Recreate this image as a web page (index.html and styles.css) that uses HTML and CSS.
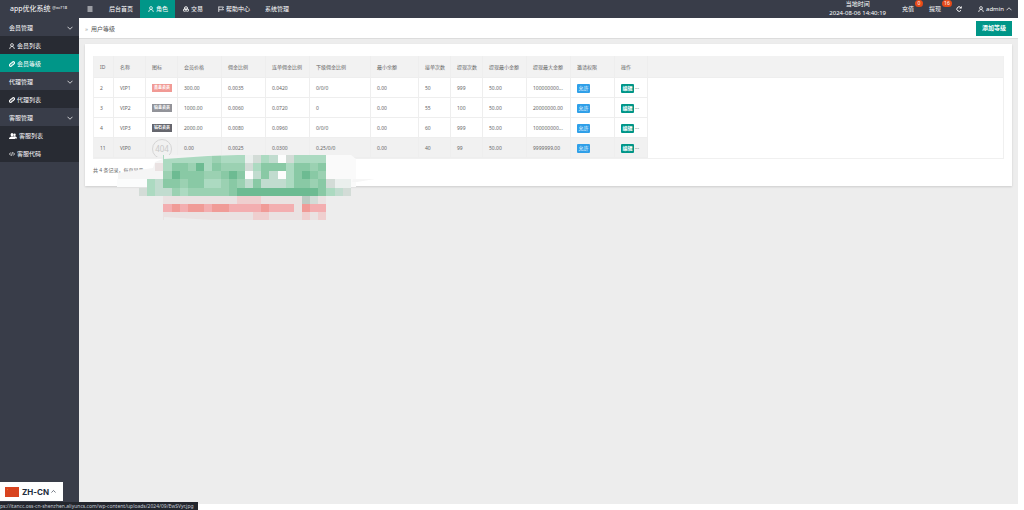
FILE: index.html
```
<!DOCTYPE html>
<html lang="zh-CN">
<head>
<meta charset="utf-8">
<title>app优化系统</title>
<link rel="stylesheet" href="styles.css">
</head>
<body>
<svg class="defs" aria-hidden="true">
  <symbol id="user" viewBox="0 0 12 12"><circle cx="6" cy="4" r="2.8"/><path d="M1.5 12c0-3 1.5-5 4.500-5s4.500 2 4.500 5"/></symbol>
  <symbol id="down" viewBox="0 0 12 12"><path d="M1 3.500l5 5 5-5"/></symbol>
  <symbol id="up" viewBox="0 0 12 12"><path d="M1 8.500l5-5 5 5"/></symbol>
  <symbol id="link" viewBox="0 0 12 12"><path stroke-width="2.200" d="M5 7.500a2 2 0 0 0 3 0l2.300-2.300a2 2 0 0 0-3.200-3.200L6 3M7 4.500a2 2 0 0 0-3 0L1.700 6.800a2 2 0 0 0 3.200 3.200L6 9"/></symbol>
  <symbol id="flag" viewBox="0 0 12 12"><path d="M1.500 1v11M1.500 2h9.500l-2 2.700 2 2.800H1.500"/></symbol>
  <symbol id="trade" viewBox="0 0 12 12"><path d="M6 .8l3 2-3 2-3-2zM3 3v3l3 2 3-2V3M6 5v3M3 5L.8 7v3L3 11.200 6 9.500l3 1.700L11.200 10V7L9 5M1 7.500h10"/></symbol>
</svg>
<div class="app">
  <header class="topbar">
    <h1 class="brand">app优化系统 <sup>@xv718</sup></h1>
    <nav class="topnav">
      <button class="menu" type="button" aria-label="菜单"><svg class="icon" viewBox="0 0 12 12"><path stroke-width="2" d="M1 2h10M1 6h10M1 10h10"/></svg></button>
      <a href="#">后台首页</a>
      <a href="#" class="active"><svg class="icon"><use href="#user"/></svg>角色</a>
      <a href="#"><svg class="icon"><use href="#trade"/></svg>交易</a>
      <a href="#"><svg class="icon"><use href="#flag"/></svg>帮助中心</a>
      <a href="#">系统管理</a>
    </nav>
    <div class="tools">
      <div class="clock"><span>当地时间</span><time>2024-08-06 14:40:19</time></div>
      <a href="#" class="notice">充值<b class="badge">0</b></a>
      <a href="#" class="notice">提现<b class="badge">16</b></a>
      <button type="button" class="refresh" aria-label="刷新"><svg class="icon" viewBox="0 0 12 12"><path stroke-width="2" d="M10 8.500A4.500 4.500 0 1 1 9.500 3"/><path fill="currentColor" stroke="none" d="M11.500 0v5.200H6.300z"/></svg></button>
      <a href="#" class="account"><svg class="icon"><use href="#user"/></svg>admin<svg class="icon"><use href="#up"/></svg></a>
    </div>
  </header>
  <div class="body">
    <aside class="sidebar">
      <a href="#" class="group">会员管理<svg class="icon"><use href="#down"/></svg></a>
      <a href="#"><svg class="icon"><use href="#user"/></svg>会员列表</a>
      <a href="#" class="active"><svg class="icon"><use href="#link"/></svg>会员等级</a>
      <a href="#" class="group">代理管理<svg class="icon"><use href="#down"/></svg></a>
      <a href="#"><svg class="icon"><use href="#link"/></svg>代理列表</a>
      <a href="#" class="group">客服管理<svg class="icon"><use href="#down"/></svg></a>
      <a href="#"><svg class="icon wide" viewBox="0 0 16 12"><g fill="currentColor" stroke="none"><circle cx="11" cy="3.500" r="2.500"/><path d="M8 11h8c0-3-2-4-4-4.500H9z"/><ellipse cx="6" cy="3.500" rx="2.800" ry="3.300"/><path d="M0 12c0-3 1.500-4 4.500-5h3c3 1 4.500 2 4.500 5z"/></g></svg>客服列表</a>
      <a href="#"><svg class="icon" viewBox="0 0 12 12"><path d="M3.500 3L1 6l2.500 3M8.500 3L11 6 8.500 9M7 2.500l-2 7"/></svg>客服代码</a>
    </aside>
    <main class="content">
      <div class="crumb"><h2><span>»</span>用户等级</h2><button type="button" class="add">添加等级</button></div>
      <section class="card">
        <div class="tablebox">
        <table>
          <colgroup><col class="c20"><col class="c32"><col class="c32"><col class="c44"><col class="c44"><col class="c44"><col class="c61"><col class="c48"><col class="c32"><col class="c32"><col class="c44"><col class="c44"><col class="c44"><col class="c33"><col></colgroup>
          <thead><tr><th>ID</th><th>名称</th><th>图标</th><th>会员价格</th><th>佣金比例</th><th>连单佣金比例</th><th>下级佣金比例</th><th>最小余额</th><th>接单次数</th><th>提现次数</th><th>提现最小金额</th><th>提现最大金额</th><th>邀请权限</th><th>操作</th><th></th></tr></thead>
          <tbody>
            <tr><td>2</td><td>VIP1</td><td><span class="level gold">黄金会员</span></td><td>300.00</td><td>0.0035</td><td>0.0420</td><td>0/0/0</td><td>0.00</td><td>50</td><td>999</td><td>50.00</td><td>100000000...</td><td><button type="button" class="allow">允许</button></td><td><button type="button" class="edit">编辑</button>...</td><td></td></tr>
            <tr><td>3</td><td>VIP2</td><td><span class="level silver">铂金会员</span></td><td>1000.00</td><td>0.0060</td><td>0.0720</td><td>0</td><td>0.00</td><td>55</td><td>100</td><td>50.00</td><td>20000000.00</td><td><button type="button" class="allow">允许</button></td><td><button type="button" class="edit">编辑</button>...</td><td></td></tr>
            <tr><td>4</td><td>VIP3</td><td><span class="level diamond">钻石会员</span></td><td>2000.00</td><td>0.0080</td><td>0.0960</td><td>0/0/0</td><td>0.00</td><td>60</td><td>999</td><td>50.00</td><td>100000000...</td><td><button type="button" class="allow">允许</button></td><td><button type="button" class="edit">编辑</button>...</td><td></td></tr>
            <tr class="hover"><td>11</td><td>VIP0</td><td><svg class="missing" viewBox="0 0 20 18"><circle cx="10" cy="10" r="9.500"/><text x="10" y="13" text-anchor="middle">404</text></svg></td><td>0.00</td><td>0.0025</td><td>0.0300</td><td>0.25/0/0</td><td>0.00</td><td>40</td><td>99</td><td>50.00</td><td>9999999.00</td><td><button type="button" class="allow">允许</button></td><td><button type="button" class="edit">编辑</button>...</td><td></td></tr>
          </tbody>
        </table>
        </div>
        <p class="pager">共 4 条记录，每页显示</p>
        <svg class="mosaic" viewBox="0 0 260 65" aria-hidden="true">
          <path fill="#f5f5f5" d="M1 18l35-5 2-6 10-4v29H1z"/>
          <path fill="#fbfcfc" d="M0 24h31v8H0z"/>
          <path fill="#fafafa" d="M209 0h25l5 4v28h-30z"/>
          <path fill="#f6f6f6" d="M236 24h22l-18 3h-5z"/>
          <g id="cells" shape-rendering="crispEdges"></g>
          <path fill="#f3f3f3" d="M47 0h74l-30 1-44 3z"/>
          <path fill="#ededed" d="M47 62l48 3H47z"/>
        </svg>
      </section>
    </main>
  </div>
</div>
<button type="button" class="lang"><svg class="cn" viewBox="0 0 14 10"><path fill="#d8431f" d="M0 0h14v10H0z"/><circle cx="2.500" cy="2.500" r=".7" fill="#e8702c"/></svg>ZH-CN<svg class="icon"><use href="#up"/></svg></button>
<div class="status">ps://itancc.oss-cn-shenzhen.aliyuncs.com/wp-content/uploads/2024/09/EwSVyr.jpg</div>
<script src="mosaic.js"></script>
</body>
</html>
```
FILE: styles.css
```
* { box-sizing: border-box; }
body { margin: 0; background: #fff; color: #666; font: 6px/10px "Noto Sans", "Noto Sans CJK SC", sans-serif; }
a { color: inherit; text-decoration: none; }
button { margin: 0; padding: 0; border: 0; background: none; color: inherit; font: inherit; }
h1, h2, p { margin: 0; font-weight: 400; }
.defs { display: none; }
.icon { width: 6px; height: 6px; flex: none; fill: none; stroke: currentColor; stroke-width: 1.5; overflow: visible; }
.icon.wide { width: 8px; }
.app { display: flex; flex-direction: column; min-height: calc(100vh - 6px); margin: 0 6px 6px 0; background: #ededed; }

.topbar { display: flex; height: 18px; background: #393d49; color: #fff; }
.brand { width: 79px; padding-left: 10px; font-size: 7px; line-height: 18px; white-space: nowrap; }
.brand sup { font-size: 4px; line-height: 0; vertical-align: 2px; }
.topnav { display: flex; }
.topnav a, .menu { display: flex; align-items: center; gap: 2px; padding: 0 8px; }
.topnav a { padding: 0 7px 0 8px; }
.menu { width: 22px; }
.topnav .active { background: #009688; }
.tools { display: flex; align-items: center; margin-left: auto; padding-right: 6px; }
.clock { display: flex; flex-direction: column; align-items: center; margin-right: 16px; line-height: 9px; }
.notice { position: relative; margin-right: 15px; }
.badge { position: absolute; left: 13px; top: -4px; min-width: 8px; padding: 0 2px; border-radius: 4px; background: #e64a19; font-size: 5px; font-weight: 400; line-height: 7px; text-align: center; }
.refresh { display: flex; margin-right: 16px; }
.account { display: flex; align-items: center; gap: 2px; }

.body { display: flex; flex: 1; }
.sidebar { width: 79px; background: #393d49; color: #fff; }
.sidebar a { display: flex; align-items: center; gap: 2px; height: 18px; padding: 1px 6px 0 9px; background: #282b33; }
.sidebar .group { justify-content: space-between; background: #393d49; }
.sidebar .active { background: #009688; }

.content { flex: 1; min-width: 0; }
.crumb { display: flex; align-items: center; justify-content: space-between; height: 21px; padding: 1px 6px 0; border-bottom: 1px solid #dcdcdc; background: #fff; }
.crumb h2 { font-size: 6px; color: #555; }
.crumb span { margin-right: 3px; color: #999; }
.add { padding: 0 6px; background: #009688; color: #fff; font-weight: 700; line-height: 15px; }
.card { position: relative; margin: 5px 6px 0; padding: 12px 8px 10px; background: #fff; box-shadow: 0 1px 2px #0002; font-size: 5px; }
.tablebox { border: 1px solid #f0f0f0; border-top: 0; }
table { width: 100%; table-layout: fixed; border-collapse: separate; border-spacing: 0; }
th, td { height: 20px; padding: 1px 0 0 6px; border-right: 1px solid #eee; border-bottom: 1px solid #eee; font-weight: 400; line-height: 9px; text-align: left; white-space: nowrap; }
th { height: 22px; background: #f2f2f2; }
th:last-child, td:last-child { border-right: 0; }
td:last-child { border-bottom: 0; background: #fff; }
.hover td:not(:last-child) { background: #f1f1f1; }
.c20 { width: 20px; }
.c32 { width: 32px; }
.c33 { width: 33px; }
.c44 { width: 44px; }
.c48 { width: 48px; }
.c61 { width: 61px; }
.level { display: block; width: 20px; color: #fff; font-size: 4px; font-weight: 700; line-height: 8px; text-align: center; }
.gold { background: #f19a95; }
.silver { background: #929399; }
.diamond { background: #65666d; }
.missing { display: block; width: 20px; height: 18px; fill: none; stroke: #d5d5d5; stroke-width: 1; }
.missing text { fill: #c8c8c8; stroke: none; font-size: 8px; }
.allow, .edit { width: 13px; height: 9px; border-radius: 1px; color: #fff; line-height: 9px; vertical-align: middle; }
.allow { background: #2f9fe8; }
.edit { margin-right: 1px; background: #009688; font-weight: 700; }
.pager { padding-top: 5px; line-height: 12px; }
.mosaic { position: absolute; left: 32px; top: 111px; width: 260px; height: 65px; }

.lang { position: fixed; left: 0; bottom: 9px; display: flex; align-items: center; gap: 2px; width: 63px; height: 19px; padding-left: 5px; background: #fff; color: #222c3c; font: 700 8px "Inter", sans-serif; }
.cn { width: 14px; height: 10px; margin-right: 1px; }
.lang .icon { width: 5px; height: 5px; }
.status { position: fixed; left: 0; bottom: 0; width: 198px; height: 8px; overflow: hidden; background: #23262d; color: #c3cbd4; font-size: 5px; line-height: 8px; white-space: nowrap; }
```
FILE: mosaic.js
```
const colors = {
  w: "#fdfdfd", l: "#eaefed", x: "#d3dcd7", g: "#c1dccf", b: "#acdac1",
  c: "#9bd1b2", d: "#89c9a5", e: "#6dbb92", k: "#bccbc3",
  n: "#eae2e2", q: "#efcfcf", r: "#f3aeb0", s: "#f09b97"
};
const rows = [
  "...bbbbbbcbbblxbgwxbbbb...",
  "..nbddcebdcccxbdddbddcd...",
  "...cedddccdedwgdgwbdedc...",
  ".bgddcddbbcdcgdgggbddcdxll",
  "xbggcbcccccdeeeeeeeeeedbgx",
  "...nnnnnnnnnqqqnnnnnkxn...",
  "...rsrssrssrrrrsrrrnsrr...",
  "...nnnnnnnnnnnqqnnnnqnq..."
];
const cells = document.getElementById("cells");
const size = 8.15;
rows.forEach((row, y) => {
  [...row].forEach((key, x) => {
    if (!colors[key]) return;
    const cell = document.createElementNS("http://www.w3.org/2000/svg", "rect");
    cell.setAttribute("x", 22 + x * size);
    cell.setAttribute("y", y * size);
    cell.setAttribute("width", size);
    cell.setAttribute("height", size);
    cell.setAttribute("fill", colors[key]);
    cells.append(cell);
  });
});
```
